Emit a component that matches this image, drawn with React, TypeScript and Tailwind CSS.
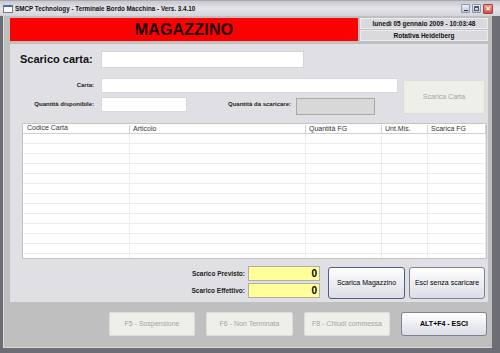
import React from "react";

const font = "font-['Liberation_Sans',Arial,sans-serif]";

function DisabledButton({ label, className }: { label: string; className: string }) {
  return (
    <div
      className={`${className} flex items-center justify-center bg-[#efefea] border border-[#dedeD8] rounded-[2px] text-[7px] text-[#a3a3a0]`}
    >
      {label}
    </div>
  );
}

function ActionButton({ label, className }: { label: string; className: string }) {
  return (
    <div
      className={`${className} flex items-center justify-center rounded-[3px] bg-gradient-to-b from-white to-[#dcdde6] text-[7px] text-black`}
    >
      {label}
    </div>
  );
}

export default function App() {
  const rows = Array.from({ length: 13 });
  return (
    <div className={`w-[500px] h-[353px] overflow-hidden bg-[#6d6d75] flex flex-col ${font}`}>
      {/* title bar */}
      <div className="h-[16px] shrink-0 flex items-center bg-gradient-to-b from-[#c8c8ce] via-[#e4e4ea] to-[#d4d4da] border-t border-[#a8a8b0]">
        <div className="ml-[3px] w-[10px] h-[8px] bg-white border border-[#6d7ea0] border-t-[2px] border-t-[#3d6cc0]" />
        <span className="ml-[2px] text-[6.3px] font-bold text-[#111] whitespace-nowrap">
          SMCP Technology - Terminale Bordo Macchina - Vers. 3.4.10
        </span>
        <div className="ml-auto mr-[7px] flex items-center gap-[2px]">
          <div className="w-[9px] h-[9px] rounded-[1px] bg-gradient-to-b from-[#eef2f8] to-[#b8c4d8] border border-[#8a96ac] flex items-end justify-center pb-[1px]">
            <div className="w-[4px] h-[1.5px] bg-[#334]" />
          </div>
          <div className="w-[9px] h-[9px] rounded-[1px] bg-gradient-to-b from-[#eef2f8] to-[#b8c4d8] border border-[#8a96ac] flex items-center justify-center">
            <div className="w-[5px] h-[5px] border border-[#556] border-t-[2px]" />
          </div>
          <div className="w-[10px] h-[10px] rounded-[1px] bg-gradient-to-b from-[#f0a090] to-[#d05040] border border-[#a04040] flex items-center justify-center text-white text-[8px] font-bold leading-none">
            ×
          </div>
        </div>
      </div>

      {/* client area */}
      <div className="flex-1 ml-[3px] mr-[8px] mb-[5px] bg-[#bfbfbf] border-l border-[#dcdcdc] border-b border-b-[#d8d8d8] flex flex-col pl-[6px] pr-[4px] pt-[2px]">
        {/* header */}
        <div className="h-[23px] flex gap-[2px]">
          <div className="w-[348px] bg-[#ff0000] flex items-center justify-center">
            <span className="text-[16px] font-bold text-[#1a0000] tracking-[0.2px]">MAGAZZINO</span>
          </div>
          <div className="flex-1 flex flex-col gap-[1px]">
            <div className="h-[11px] bg-[#dadade] border border-[#ececf0] flex items-center justify-center text-[6.5px] font-bold text-[#111] whitespace-nowrap">
              lunedì 05 gennaio 2009 - 10:03:48
            </div>
            <div className="h-[11px] bg-[#dadade] border border-[#ececf0] flex items-center justify-center text-[6.5px] font-bold text-[#111]">
              Rotativa Heidelberg
            </div>
          </div>
        </div>

        {/* main panel */}
        <div className="mt-[3px] h-[258px] bg-[#e0e0e4] flex flex-col">
          <div className="mt-[7px] h-[17px] flex items-center pl-[10px]">
            <span className="w-[81px] text-[11px] font-bold text-[#111] whitespace-nowrap">Scarico carta:</span>
            <div className="w-[203px] h-[17px] bg-white border border-[#d4d4d8]" />
          </div>

          <div className="mt-[10px] flex">
            <div className="w-[388px] flex flex-col gap-[4px]">
              <div className="h-[15px] flex items-center">
                <span className="w-[84px] text-right text-[6px] font-bold text-[#222]">Carta:</span>
                <div className="ml-[7px] w-[297px] h-[15px] bg-white border border-[#d8d8dc]" />
              </div>
              <div className="h-[15px] flex items-center">
                <span className="w-[84px] text-right text-[6px] font-bold text-[#222] whitespace-nowrap">Quantità disponibile:</span>
                <div className="ml-[7px] w-[86px] h-[15px] bg-white border border-[#d8d8dc]" />
                <span className="w-[104px] text-right text-[6px] font-bold text-[#222] whitespace-nowrap">Quantità da scaricare:</span>
                <div className="ml-[5px] mt-[3px] w-[79px] h-[17px] bg-[#d8d8d8] border border-[#a8a8a8]" />
              </div>
            </div>
            <DisabledButton label="Scarica Carta" className="ml-[5px] mt-[2px] w-[82px] h-[34px]" />
          </div>

          {/* table */}
          <div className="mt-[9px] ml-[12px] mr-[1px] h-[136px] bg-white border border-[#c4c4c8] overflow-hidden flex flex-col">
            <div className="h-[10px] shrink-0 flex items-center border-b border-[#d0d0d4] text-[7px] text-[#333]">
              <div className="w-[106px] pl-[4px]">Codice Carta</div>
              <div className="w-[176px] pl-[3px] border-l border-[#d0d0d4] h-[8px] leading-[8px]">Articolo</div>
              <div className="w-[76px] pl-[3px] border-l border-[#d0d0d4] h-[8px] leading-[8px]">Quantità FG</div>
              <div className="w-[46px] pl-[3px] border-l border-[#d0d0d4] h-[8px] leading-[8px]">Unt.Mis.</div>
              <div className="w-[58px] pl-[3px] border-l border-[#d0d0d4] h-[8px] leading-[8px]">Scarica FG</div>
              <div className="border-l border-[#d0d0d4] h-[8px]" />
            </div>
            {rows.map((_, i) => (
              <div key={i} className="h-[10px] shrink-0 flex border-b border-[#ececee]">
                <div className="w-[106px]" />
                <div className="w-[176px] border-l border-[#ececee]" />
                <div className="w-[76px] border-l border-[#ececee]" />
                <div className="w-[46px] border-l border-[#ececee]" />
                <div className="w-[58px] border-l border-[#ececee]" />
                <div className="border-l border-[#ececee]" />
              </div>
            ))}
          </div>

          {/* totals + actions */}
          <div className="mt-[7px] flex justify-end pr-[3px]">
            <div className="flex flex-col gap-[2px]">
              <div className="h-[15px] flex items-center justify-end">
                <span className="text-[6.5px] font-bold text-[#222]">Scarico Previsto:</span>
                <div className="ml-[3px] w-[72px] h-[15px] bg-[#ffff99] border border-[#b0b0a0] flex items-center justify-end pr-[2px] text-[10px] font-bold text-black">
                  0
                </div>
              </div>
              <div className="h-[15px] flex items-center justify-end">
                <span className="text-[6.5px] font-bold text-[#222]">Scarico Effettivo:</span>
                <div className="ml-[3px] w-[72px] h-[15px] bg-[#ffff99] border border-[#b0b0a0] flex items-center justify-end pr-[2px] text-[10px] font-bold text-black">
                  0
                </div>
              </div>
            </div>
            <ActionButton label="Scarica Magazzino" className="ml-[8px] mt-[1px] w-[77px] h-[32px] border border-[#4a5e86]" />
            <ActionButton label="Esci senza scaricare" className="ml-[4px] mt-[1px] w-[76px] h-[32px] border border-[#7c8494]" />
          </div>
        </div>

        {/* function keys */}
        <div className="mt-[10px] flex justify-end gap-[11px] pr-[1px]">
          <DisabledButton label="F5 - Sospensione" className="w-[86px] h-[24px]" />
          <DisabledButton label="F6 - Non Terminata" className="w-[87px] h-[24px]" />
          <DisabledButton label="F8 - Chiudi commessa" className="w-[86px] h-[24px]" />
          <ActionButton label="ALT+F4 - ESCI" className="w-[86px] h-[24px] border border-[#7c8494] font-bold" />
        </div>
      </div>
    </div>
  );
}
